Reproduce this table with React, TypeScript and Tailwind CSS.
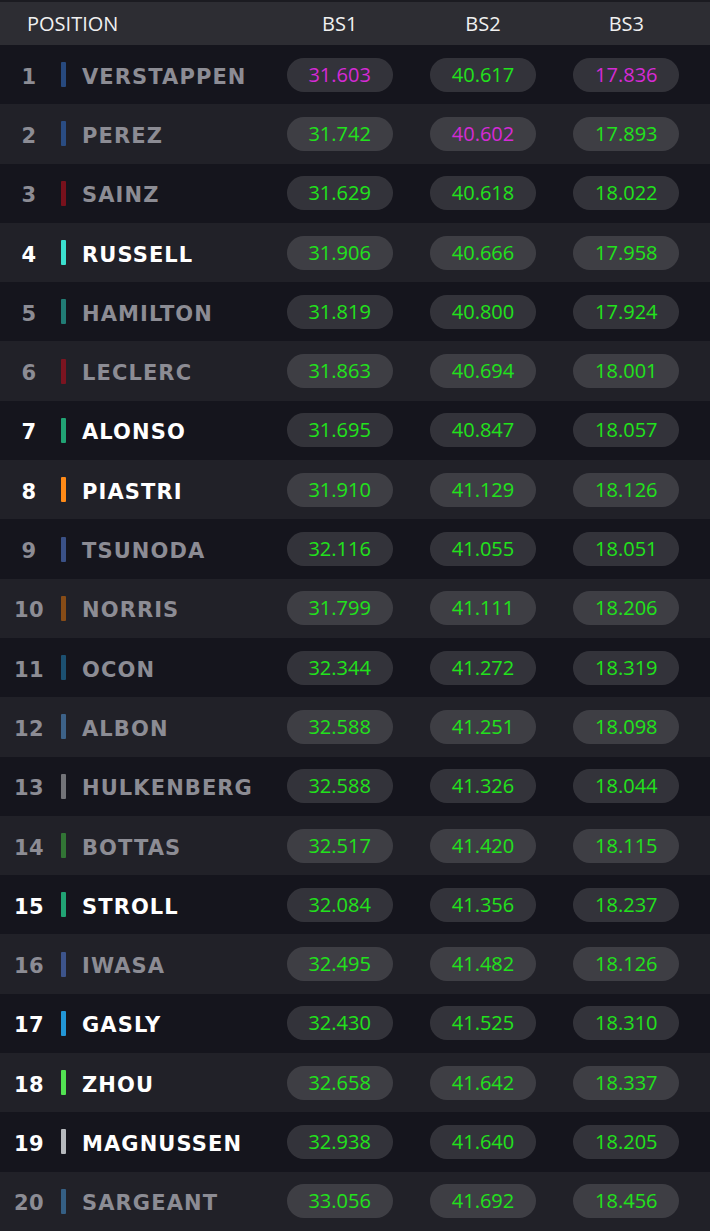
type Row = {
  pos: number
  name: string
  team: string
  bright: boolean
  times: [string, string, string]
  best?: number[]
}

const rows: Row[] = [
  { pos: 1, name: "VERSTAPPEN", team: "bg-[#2f5fa8]", bright: false, times: ["31.603", "40.617", "17.836"], best: [0, 2] },
  { pos: 2, name: "PEREZ", team: "bg-[#2f5fa8]", bright: false, times: ["31.742", "40.602", "17.893"], best: [1] },
  { pos: 3, name: "SAINZ", team: "bg-[#a3101c]", bright: false, times: ["31.629", "40.618", "18.022"] },
  { pos: 4, name: "RUSSELL", team: "bg-[#3be0cf]", bright: true, times: ["31.906", "40.666", "17.958"] },
  { pos: 5, name: "HAMILTON", team: "bg-[#27a89b]", bright: false, times: ["31.819", "40.800", "17.924"] },
  { pos: 6, name: "LECLERC", team: "bg-[#a3101c]", bright: false, times: ["31.863", "40.694", "18.001"] },
  { pos: 7, name: "ALONSO", team: "bg-[#21a374]", bright: true, times: ["31.695", "40.847", "18.057"] },
  { pos: 8, name: "PIASTRI", team: "bg-[#ff8a17]", bright: true, times: ["31.910", "41.129", "18.126"] },
  { pos: 9, name: "TSUNODA", team: "bg-[#4a6bb5]", bright: false, times: ["32.116", "41.055", "18.051"] },
  { pos: 10, name: "NORRIS", team: "bg-[#b3600f]", bright: false, times: ["31.799", "41.111", "18.206"] },
  { pos: 11, name: "OCON", team: "bg-[#1f6a96]", bright: false, times: ["32.344", "41.272", "18.319"] },
  { pos: 12, name: "ALBON", team: "bg-[#4a7fb0]", bright: false, times: ["32.588", "41.251", "18.098"] },
  { pos: 13, name: "HULKENBERG", team: "bg-[#9a9ba0]", bright: false, times: ["32.588", "41.326", "18.044"] },
  { pos: 14, name: "BOTTAS", team: "bg-[#3a9a3a]", bright: false, times: ["32.517", "41.420", "18.115"] },
  { pos: 15, name: "STROLL", team: "bg-[#21a374]", bright: true, times: ["32.084", "41.356", "18.237"] },
  { pos: 16, name: "IWASA", team: "bg-[#4a6bb5]", bright: false, times: ["32.495", "41.482", "18.126"] },
  { pos: 17, name: "GASLY", team: "bg-[#2296d6]", bright: true, times: ["32.430", "41.525", "18.310"] },
  { pos: 18, name: "ZHOU", team: "bg-[#52e252]", bright: true, times: ["32.658", "41.642", "18.337"] },
  { pos: 19, name: "MAGNUSSEN", team: "bg-[#b6b9bd]", bright: true, times: ["32.938", "41.640", "18.205"] },
  { pos: 20, name: "SARGEANT", team: "bg-[#3f7bab]", bright: false, times: ["33.056", "41.692", "18.456"] },
]

function TimePill({ value, best }: { value: string; best: boolean }) {
  return (
    <div className="flex justify-center">
      <div
        className={
          "flex h-[34px] w-[106px] items-center justify-center rounded-full bg-white/[0.13] font-['Open_Sans',sans-serif] text-[20px] font-medium leading-none " +
          (best ? "text-[#d62ad6]" : "text-[#22e21c]")
        }
      >
        {value}
      </div>
    </div>
  )
}

export default function App() {
  return (
    <div className="flex h-[1231px] w-[710px] flex-col bg-[#15151d]">
      {/* header */}
      <div className="flex h-[45px] shrink-0 items-center border-t-2 border-[#1b1b21] bg-[#2d2d33] pr-[12px] font-['Open_Sans',sans-serif] text-[20px] text-[#f0f0f0]">
        <div className="w-[268px] pl-[27px]">POSITION</div>
        <div className="grid flex-1 grid-cols-3 text-center">
          <div>BS1</div>
          <div>BS2</div>
          <div>BS3</div>
        </div>
      </div>

      {rows.map((r) => (
        <div
          key={r.pos}
          className={
            "flex flex-1 items-center pr-[12px] " +
            (r.pos % 2 === 0 ? "bg-[#212128]" : "bg-[#15151d]")
          }
        >
          <div className="flex w-[268px] items-center font-['DejaVu_Sans',sans-serif] font-bold">
            <div
              className={
                "w-[58px] pt-[5px] text-center text-[21px] leading-none tracking-[0.5px] " +
                (r.bright ? "text-white" : "text-[#8c8c94]")
              }
            >
              {r.pos}
            </div>
            <div
              className={
                "ml-[3px] h-[25px] w-[5px] rounded-[1px] " +
                r.team +
                (r.bright ? "" : " opacity-70")
              }
            />
            <div
              className={
                "ml-[16px] pt-[5px] text-[21px] leading-none tracking-[1.1px] " +
                (r.bright ? "text-white" : "text-[#8c8c94]")
              }
            >
              {r.name}
            </div>
          </div>
          <div className="grid flex-1 grid-cols-3">
            {r.times.map((t, i) => (
              <TimePill key={i} value={t} best={!!r.best?.includes(i)} />
            ))}
          </div>
        </div>
      ))}
    </div>
  )
}
